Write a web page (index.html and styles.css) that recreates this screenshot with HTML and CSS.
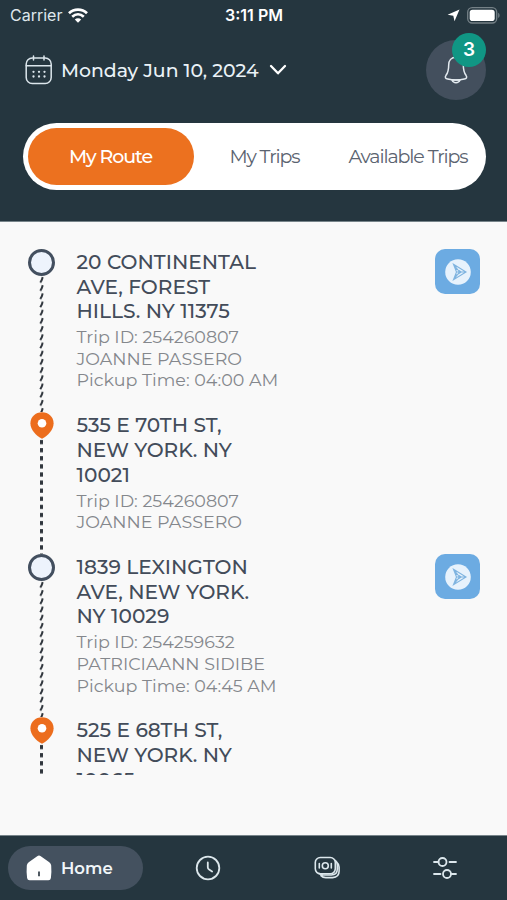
FILE: index.html
```html
<!DOCTYPE html>
<html lang="en">
<head>
<meta charset="utf-8">
<title>My Route</title>
<link rel="stylesheet" href="styles.css">
</head>
<body>
<div class="app">
  <header class="header">
    <div class="status">
      <div class="carrier"><span>Carrier</span>
        <svg width="20" height="15" viewBox="0 0 20 15" fill="none" stroke="#fff" stroke-width="2.700"><path d="M1 5.200C6 .3 14 .3 19 5.200M4.200 8.700c3.500-3.200 8.100-3.200 11.600 0"/><path d="M10 14.700l-3.200-3.300c1.700-1.600 4.700-1.600 6.400 0z" fill="#fff" stroke="none"/></svg>
      </div>
      <span class="time">3:11 PM</span>
      <div class="status-right">
        <svg width="13" height="13" viewBox="0 0 13 13"><path d="M12.500.5L7.500 12.300 6.300 6.800.6 5.700z" fill="#fff"/></svg>
        <svg width="33" height="17" viewBox="0 0 33 17"><rect x=".7" y=".7" width="29" height="15.300" rx="4.500" fill="none" stroke="#758187" stroke-width="1.300"/><rect x="2.700" y="2.700" width="25" height="11.300" rx="2.800" fill="#fff"/><path d="M31.200 5.800c1.800.8 1.800 4.400 0 5.200z" fill="#758187"/></svg>
      </div>
    </div>
    <div class="date-row">
      <svg class="calendar" width="28" height="30" viewBox="0 0 28 30" fill="none" stroke="#dce6ec" stroke-width="1.500" stroke-linecap="round"><rect x="1.200" y="3" width="25" height="25.500" rx="6"/><path d="M1.200 10.800h25M8.500 1v4M19 1v4"/><path d="M8.500 16.800h.01M14 16.800h.01M19.500 16.800h.01M8.500 21.500h.01M14 21.500h.01M19.500 21.500h.01" stroke-width="2.300"/></svg>
      <span class="date">Monday Jun 10, 2024</span>
      <svg class="chevron" width="18" height="12" viewBox="0 0 18 12" fill="none" stroke="#fff" stroke-width="2.300" stroke-linecap="round" stroke-linejoin="round"><path d="M2 2l7 7.300L16 2"/></svg>
      <div class="bell">
        <svg width="26" height="30" viewBox="0 0 26 30" fill="none" stroke="#e4ebf0" stroke-width="1.500" stroke-linejoin="round"><path d="M13 2.200c-4.800 0-7.300 3.300-7.300 7.700 0 5.500-.7 7.600-2.700 10.400-1.500 2.300-.4 3.300 1.700 3.800 5.300 1.200 11.300 1.200 16.600 0 2.100-.5 3.200-1.500 1.700-3.800-2-2.800-2.700-4.900-2.700-10.400 0-4.400-2.500-7.700-7.300-7.700z"/><path d="M9 25c1.500 3.600 6.500 3.600 8 0z"/></svg>
        <span class="badge">3</span>
      </div>
    </div>
    <nav class="tabs">
      <span class="tab tab-active">My Route</span>
      <span class="tab tab-mid">My Trips</span>
      <span class="tab tab-last">Available Trips</span>
    </nav>
  </header>

  <main class="route">
    <section class="stop">
      <div class="rail"><span class="ring"></span>
        <svg class="track" width="5"><defs><pattern id="slant" width="5" height="8.200" patternUnits="userSpaceOnUse"><path d="M3.700 1L2.800 4 1.300 6.600" fill="none" stroke="#30363d" stroke-width="2"/></pattern><pattern id="square" width="5" height="8.100" patternUnits="userSpaceOnUse"><rect x="1" y="1" width="3" height="4.200" fill="#30363d"/></pattern></defs><rect width="5" height="100%" fill="url(#slant)"/></svg>
      </div>
      <div class="info">
        <h2>20 CONTINENTAL<br>AVE, FOREST<br>HILLS. NY 11375</h2>
        <p>Trip ID: 254260807<br>JOANNE PASSERO<br>Pickup Time: 04:00 AM</p>
      </div>
      <div class="go"><svg width="26" height="26" viewBox="0 0 26 26"><circle cx="13" cy="13" r="12.800" fill="#e7f2fc"/><path d="M8.500 5.300L21 13 8.500 20.700l3-7.700zM11.500 13H21M8.500 5.300l6 7.700-6 7.700M10.300 9.300l6 3.700-6 3.700" fill="none" stroke="#7fb4e0" stroke-width="1.100"/></svg></div>
    </section>
    <section class="stop">
      <div class="rail"><svg class="pin" width="24" height="27" viewBox="0 0 24 27"><path d="M12 .3C5.500.3.400 5 .4 11.300.4 18 6 23.500 12 26.800 18 23.500 23.600 18 23.600 11.300 23.600 5 18.500.3 12 .3z" fill="#ec6d1d"/><circle cx="12" cy="11.300" r="4.300" fill="#fff"/></svg>
        <svg class="track" width="5"><rect width="5" height="100%" fill="url(#square)"/></svg></div>
      <div class="info">
        <h2>535 E 70TH ST,<br>NEW YORK. NY<br>10021</h2>
        <p>Trip ID: 254260807<br>JOANNE PASSERO</p>
      </div>
    </section>
    <section class="stop">
      <div class="rail"><span class="ring"></span>
        <svg class="track" width="5"><rect width="5" height="100%" fill="url(#slant)"/></svg></div>
      <div class="info">
        <h2>1839 LEXINGTON<br>AVE, NEW YORK.<br>NY 10029</h2>
        <p>Trip ID: 254259632<br>PATRICIAANN SIDIBE<br>Pickup Time: 04:45 AM</p>
      </div>
      <div class="go"><svg width="26" height="26" viewBox="0 0 26 26"><circle cx="13" cy="13" r="12.800" fill="#e7f2fc"/><path d="M8.500 5.300L21 13 8.500 20.700l3-7.700zM11.500 13H21M8.500 5.300l6 7.700-6 7.700M10.300 9.300l6 3.700-6 3.700" fill="none" stroke="#7fb4e0" stroke-width="1.100"/></svg></div>
    </section>
    <section class="stop">
      <div class="rail"><svg class="pin" width="24" height="27" viewBox="0 0 24 27"><path d="M12 .3C5.500.3.400 5 .4 11.300.4 18 6 23.500 12 26.800 18 23.500 23.600 18 23.600 11.300 23.600 5 18.500.3 12 .3z" fill="#ec6d1d"/><circle cx="12" cy="11.300" r="4.300" fill="#fff"/></svg>
        <svg class="track" width="5"><rect width="5" height="100%" fill="url(#square)"/></svg></div>
      <div class="info">
        <h2>525 E 68TH ST,<br>NEW YORK. NY<br>10065</h2>
      </div>
    </section>
  </main>

  <footer class="bottom">
    <div class="home">
      <svg width="26" height="26" viewBox="0 0 26 26"><path d="M11.200 1.200q1.800-1.200 3.600 0l8.500 6q1.700 1.200 1.900 3.300.5 6-.3 12.500-.3 2.200-2.500 2.200H3.600q-2.200 0-2.500-2.200-.8-6.500-.3-12.500.2-2.100 1.900-3.300z" fill="#fff"/><path d="M13 16.500v4.800" stroke="#3d4852" stroke-width="1.800"/></svg>
      <span class="home-label">Home</span>
    </div>
    <div class="item"><svg width="26" height="26" viewBox="0 0 26 26" fill="none" stroke="#dce7ec" stroke-width="1.800" stroke-linecap="round"><circle cx="13" cy="13" r="11.300"/><path d="M12.800 7.500v4.800q0 1.500 1.300 2.300l3 1.900"/></svg></div>
    <div class="item"><svg width="26" height="24" viewBox="0 0 26 24" fill="none" stroke="#dce7ec" stroke-width="1.600" stroke-linecap="round"><rect x="1.300" y="1.500" width="20" height="16.300" rx="5"/><circle cx="11.300" cy="9.700" r="3"/><path d="M5.300 7.500v4.400M17.300 7.500v4.400M21.300 4.500q2 1.400 2 4.500v4q0 6-6 6H9.500q-3 0-4.600-1.600M23.300 6.800q1.800 1.400 1.800 4.300v4q0 6.500-6.500 6.500h-6.800q-3 0-4.900-2"/></svg></div>
    <div class="item"><svg width="24" height="24" viewBox="0 0 24 24" fill="none" stroke="#dce7ec" stroke-width="1.800" stroke-linecap="round"><circle cx="9.500" cy="6" r="4"/><circle cx="14" cy="18" r="4"/><path d="M1 6h4.500M16.500 6H23M1 18h6.500M18 18h5"/></svg></div>
  </footer>
</div>
</body>
</html>
```
FILE: styles.css
```css
* { box-sizing: border-box; }
body { margin: 0; font-family: Montserrat, Inter, "Liberation Sans", sans-serif; }
svg { display: block; flex: none; }
.app { width: 507px; height: 900px; display: flex; flex-direction: column; background: #f9f9f9; overflow: hidden; }
.header { height: 222px; background: #25363f; border-bottom: 1px solid #77848a; flex: none; }
.status { display: grid; grid-template-columns: 1fr auto 1fr; align-items: center; height: 30px; padding: 0 7px 0 10px; color: #fff; font-family: Inter, sans-serif; }
.carrier { display: flex; align-items: center; gap: 6px; font-size: 16px; color: #dfe7ec; }
.time { font-size: 16px; font-weight: 600; margin-left: -2px; }
.status-right { display: flex; justify-content: flex-end; align-items: center; gap: 7px; }
.date-row { display: flex; align-items: center; height: 80px; padding: 0 21px 0 25px; }
.date { margin-left: 8px; font-size: 18.850px; font-weight: 500; color: #eaf2f7; white-space: nowrap; }
.chevron { margin-left: 10px; }
.bell { position: relative; width: 60px; height: 60px; margin-left: auto; border-radius: 50%; background: #434f5d; display: grid; place-items: center; }
.badge { position: absolute; top: -7px; right: 0; width: 34px; height: 34px; border-radius: 50%; background: #109684; color: #fff; font-family: Inter, sans-serif; font-size: 19px; font-weight: 600; line-height: 34px; text-align: center; }
.tabs { display: flex; width: 463px; height: 67px; margin: 12.500px 0 0 22.500px; padding: 5px; border-radius: 34px; background: #fff; }
.tab { display: flex; align-items: center; justify-content: center; font-size: 19px; letter-spacing: -1.100px; color: #5b6370; white-space: nowrap; }
.tab-active { width: 166px; border-radius: 29px; background: #ec711f; color: #fff; font-weight: 500; }
.tab-mid { width: 142px; }
.tab-last { flex: 1; }
.route { height: 553px; padding: 28px 27px 0 28px; overflow: hidden; flex: none; }
.stop { display: flex; align-items: stretch; }
.rail { width: 27px; display: flex; flex-direction: column; align-items: center; flex: none; margin: -1px 0 1px; }
.ring { width: 27px; height: 27px; border-radius: 50%; border: 3px solid #434f5f; background: #edf3fc; flex: none; }
.track { flex: 1 0 0; height: 0; min-height: 0; }
.info { margin-left: 21.500px; padding-bottom: 22.300px; flex: 1; white-space: nowrap; }
h2, p { margin: 0; }
h2 { font-size: 20.150px; line-height: 24.600px; font-weight: 500; color: #434c5a; }
p { margin-top: 2.500px; font-size: 17.500px; line-height: 21.600px; color: #84878c; }
.go { width: 45px; height: 45px; margin-top: -1px; border-radius: 10px; background: #6cabe2; display: grid; place-items: center; }
.bottom { margin-top: auto; height: 65px; background: #25363f; border-top: 1px solid #77848a; display: flex; align-items: center; padding: 0 0 1px 8px; }
.home { width: 135px; height: 44px; border-radius: 22px; background: #44515f; display: flex; align-items: center; padding-left: 18px; gap: 9px; }
.home-label { color: #f1f6f9; font-size: 16.500px; font-weight: 600; }
.item { display: grid; place-items: center; width: 118.500px; }
.home + .item { margin-left: 6px; }
```
